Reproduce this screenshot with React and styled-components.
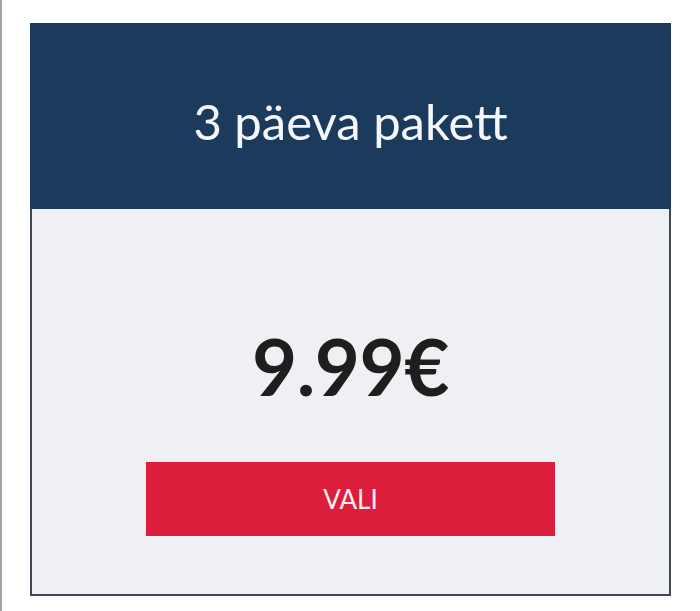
import styled, { createGlobalStyle } from "styled-components";

const GlobalStyle = createGlobalStyle`
  html, body {
    margin: 0;
    padding: 0;
    background: #ffffff;
  }
  body {
    font-family: Lato, "Noto Sans", sans-serif;
  }
`;

const Page = styled.main`
  min-height: 611px;
  box-sizing: border-box;
  border-left: 2px solid #a3a3a3;
  padding: 23px 29px 0 28px;
`;

const Card = styled.section`
  display: flex;
  flex-direction: column;
  height: 573px;
`;

const Header = styled.header`
  height: 186px;
  background: #1b3a5c;
  display: flex;
  align-items: center;
  justify-content: center;
  h2 {
    margin: 0;
    color: #f4f7fb;
    font-weight: 400;
    font-size: 49px;
    line-height: 1;
    padding-top: 10px;
  }
`;

const Body = styled.div`
  flex: 1;
  background: #eef0f3;
  border: 2px solid #3d4853;
  border-top: none;
  display: flex;
  flex-direction: column;
  align-items: center;
  padding: 118px 0 0;
`;

const Price = styled.div`
  color: #1e1e1e;
  font-weight: 700;
  font-size: 78px;
  line-height: 1;
  letter-spacing: -0.5px;
`;

const Button = styled.button`
  margin-top: 57px;
  width: 409px;
  height: 74px;
  border: none;
  background: #dc1d3c;
  color: #f6eef0;
  font-family: Lato, "Noto Sans", sans-serif;
  font-size: 26px;
  font-weight: 400;
  cursor: pointer;
`;

const App = () => {
  return (
    <>
      <GlobalStyle />
      <Page>
        <Card>
          <Header>
            <h2>3 päeva pakett</h2>
          </Header>
          <Body>
            <Price>9.99€</Price>
            <Button>VALI</Button>
          </Body>
        </Card>
      </Page>
    </>
  );
};

export default App;
